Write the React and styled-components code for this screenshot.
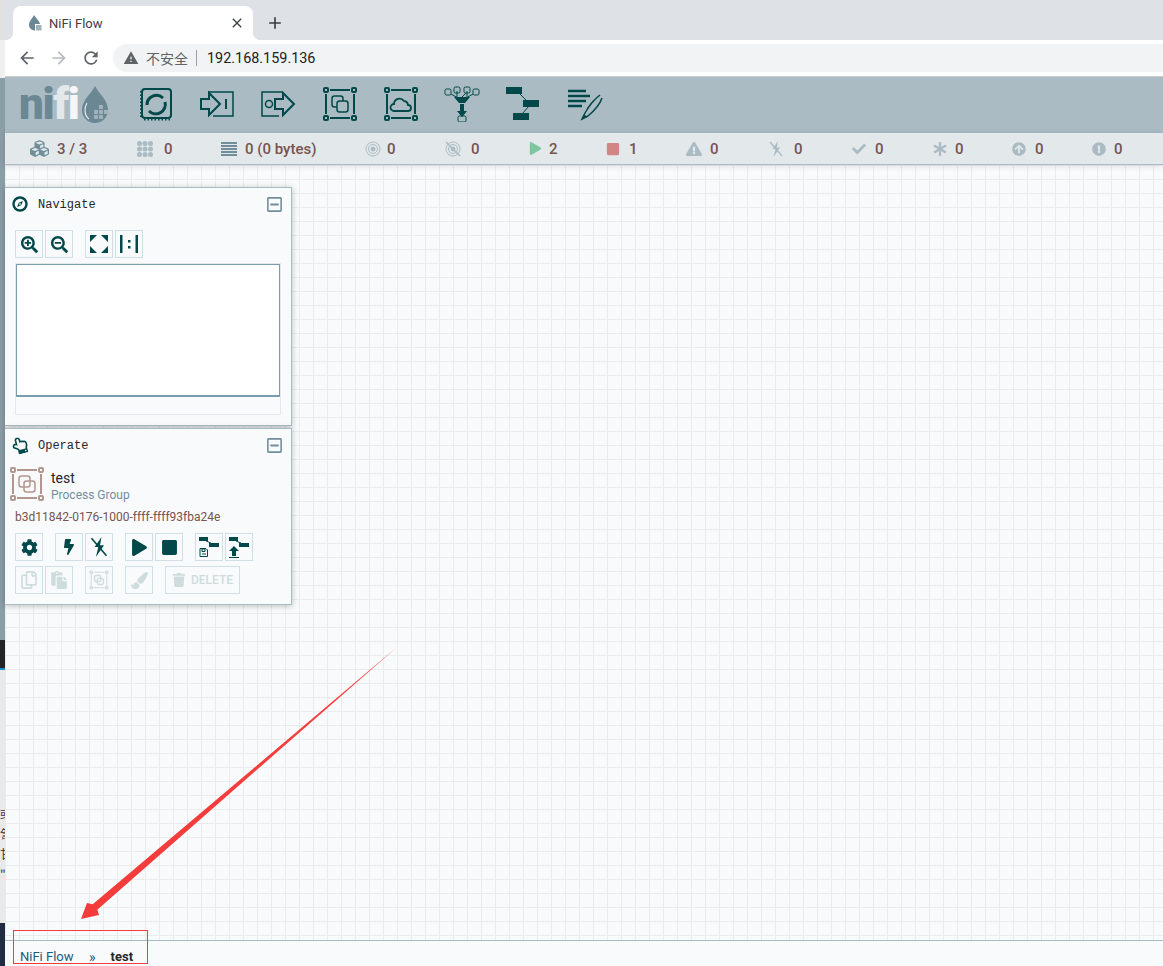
import React from 'react';
import styled, { createGlobalStyle } from 'styled-components';
import {
  FaCubes, FaPlay, FaStop, FaExclamationTriangle, FaCheck, FaAsterisk,
  FaArrowCircleUp, FaExclamationCircle, FaBolt, FaSearchPlus, FaSearchMinus, FaCog,
  FaPaintBrush, FaTrash, FaRegCopy, FaPaste, FaRegHandPointUp, FaRegMinusSquare,
} from 'react-icons/fa';

const TEAL = '#004849';
const MUTED = '#aabbc3';
const SLATE = '#728e9b';
const BROWN = '#775351';
const FADED = '#cfdcdd';

const GlobalStyle = createGlobalStyle`
  html, body { margin: 0; padding: 0; height: 100%; overflow: hidden; }
  body { font-family: Roboto, "Noto Sans CJK SC", sans-serif; }
  * { box-sizing: border-box; }
`;

const Page = styled.div`
  position: relative;
  display: flex;
  width: 1163px;
  height: 966px;
  overflow: hidden;
`;

const Sliver = styled.div`
  width: 5px;
  flex: none;
  display: flex;
  flex-direction: column;
  overflow: hidden;
`;

const SliverPart = styled.div`
  height: ${(p) => p.$h}px;
  flex: none;
  background: ${(p) => p.$bg};
  border-bottom: ${(p) => (p.$line ? `2px solid ${p.$line}` : 'none')};
`;

const SliverText = styled(SliverPart)`
  display: flex;
  flex-direction: column;
  gap: 8px;
  padding-top: 138px;
  align-items: flex-end;
  font: 12px "Noto Sans CJK SC", sans-serif;
  line-height: 12px;
  color: #3a3340;
  direction: rtl;
  white-space: nowrap;
`;

const Browser = styled.div`
  flex: 1;
  min-width: 0;
  display: flex;
  flex-direction: column;
`;

const TabStrip = styled.div`
  height: 40px;
  flex: none;
  background: #dee1e6;
  display: flex;
  align-items: flex-end;
  padding-left: 8px;
`;

const Tab = styled.div`
  position: relative;
  width: 240px;
  height: 34px;
  background: #fff;
  border-radius: 8px 8px 0 0;
  display: flex;
  align-items: center;
  padding: 0 8px 0 15px;
  &::before, &::after {
    content: '';
    position: absolute;
    bottom: 0;
    width: 8px;
    height: 8px;
  }
  &::before { left: -8px; background: radial-gradient(circle at 0 0, transparent 8px, #fff 8.5px); }
  &::after { right: -8px; background: radial-gradient(circle at 100% 0, transparent 8px, #fff 8.5px); }
`;

const TabTitle = styled.span`
  flex: 1;
  margin-left: 7px;
  font-size: 13px;
  color: #3c4043;
`;

const ChromeGlyph = styled.svg`
  width: ${(p) => p.$size || 18}px;
  height: ${(p) => p.$size || 18}px;
  flex: none;
  fill: ${(p) => p.$color || '#5f6368'};
`;

const NewTab = styled.div`
  width: 44px;
  height: 34px;
  display: flex;
  align-items: center;
  justify-content: center;
`;

const AddressBar = styled.div`
  height: 37px;
  flex: none;
  background: #fff;
  border-bottom: 1px solid #c8ccd0;
  display: flex;
  align-items: flex-start;
  padding: 4px 0 0 6px;
`;

const NavButton = styled.div`
  width: 32px;
  height: 28px;
  flex: none;
  display: flex;
  align-items: center;
  justify-content: center;
`;

const Omnibox = styled.div`
  flex: 1;
  height: 28px;
  margin-left: 6px;
  background: #f1f3f4;
  border-radius: 14px 0 0 14px;
  display: flex;
  align-items: center;
  padding-left: 10px;
`;

const Insecure = styled.span`
  margin-left: 7px;
  font: 14px "Noto Sans CJK SC", sans-serif;
  color: #5f6368;
`;

const OmniDivider = styled.span`
  width: 1px;
  height: 16px;
  margin: 0 10px 0 8px;
  background: #9aa0a6;
`;

const Url = styled.span`
  font-size: 14.4px;
  color: #202124;
`;

const Toolbar = styled.header`
  height: 56px;
  flex: none;
  background: ${MUTED};
  display: flex;
  align-items: center;
  padding: 0 0 3px 14px;
`;

const Logo = styled.div`
  width: 106px;
  height: 42px;
  flex: none;
  display: flex;
  align-items: center;
`;

const LogoWord = styled.span`
  font: 900 44px/42px Roboto, sans-serif;
  letter-spacing: -1.4px;
  color: #6b8794;
  span { color: #e3e8eb; }
  span + span { color: #f4f6f7; }
`;

const DropSvg = styled.svg`
  width: 28px;
  height: 38px;
  margin-left: 3px;
  flex: none;
`;

const ToolIcon = styled.div`
  width: 61.3px;
  height: 36px;
  flex: none;
  display: flex;
  justify-content: center;
  svg {
    width: 36px;
    height: 36px;
    fill: none;
    stroke: ${TEAL};
    stroke-width: 2;
  }
`;

const StatusBar = styled.div`
  position: relative;
  z-index: 1;
  height: 32px;
  flex: none;
  background: #e3e8eb;
  border-bottom: 1px solid ${MUTED};
  box-shadow: 0 1px 6px rgba(0, 0, 0, 0.12);
  display: flex;
  align-items: center;
  padding-left: 25px;
`;

const StatItem = styled.div`
  width: ${(p) => p.$w}px;
  flex: none;
  display: flex;
  align-items: center;
  font-size: 15px;
  font-weight: 500;
  color: ${BROWN};
`;

const StatIcon = styled.span`
  width: ${(p) => p.$w}px;
  height: 18px;
  flex: none;
  display: flex;
  align-items: center;
  color: ${(p) => p.$color || MUTED};
  svg { display: block; }
`;

const Canvas = styled.main`
  position: relative;
  flex: 1;
  min-height: 0;
  background-color: #f9fafb;
  background-image:
    linear-gradient(to right, #e9ebed 1px, transparent 1px),
    linear-gradient(to bottom, #e9ebed 1px, transparent 1px);
  background-size: 14px 14px;
`;

const PaletteColumn = styled.div`
  position: absolute;
  left: 0;
  top: 22px;
  width: 287px;
  display: flex;
  flex-direction: column;
  gap: 2px;
`;

const Palette = styled.section`
  height: ${(p) => p.$h}px;
  padding: 0 10px;
  background: rgba(249, 250, 251, 0.97);
  border: 1px solid ${MUTED};
  border-left: none;
  box-shadow: 0 1px 6px rgba(0, 0, 0, 0.25);
`;

const PaletteHead = styled.div`
  height: 34px;
  padding-bottom: 2px;
  display: flex;
  align-items: center;
  margin-left: -3px;
`;

const PaletteTitle = styled.h3`
  flex: 1;
  margin: 2px 0 0 10px;
  font: 400 12px "Liberation Mono", monospace;
  color: #262626;
`;

const HeadIcon = styled.span`
  width: 16px;
  display: flex;
  justify-content: center;
  color: ${TEAL};
  transform: rotate(${(p) => p.$tilt || 0}deg);
`;

const Collapse = styled.span`
  display: flex;
  margin-right: -2px;
  color: ${SLATE};
`;

const ButtonRow = styled.div`
  display: flex;
  gap: 12px;
  margin-top: ${(p) => p.$top || 0}px;
`;

const ButtonGroup = styled.div`
  display: flex;
  gap: 2px;
`;

const ActionButton = styled.button`
  width: ${(p) => (p.$wide ? 75 : 28)}px;
  height: 28px;
  padding: 0;
  background: transparent;
  border: 1px solid #cfdfe3;
  display: flex;
  align-items: center;
  justify-content: center;
  gap: 5px;
  color: ${(p) => (p.disabled ? FADED : TEAL)};
  font: 500 12px Roboto, sans-serif;
`;

const Birdseye = styled.div`
  width: 266px;
  height: 152px;
  margin-top: 5px;
  border: 1px solid #e3e8eb;
`;

const Viewport = styled.div`
  height: 133px;
  background: #fff;
  border: 1px solid #7a9cae;
  border-bottom-width: 2px;
`;

const GroupRow = styled.div`
  display: flex;
  align-items: flex-start;
  height: 32px;
  margin: 5px 0 0 -4px;
`;

const GroupIcon = styled.svg`
  width: 36px;
  height: 36px;
  margin: -2px 0 0 -2px;
  flex: none;
  fill: none;
  stroke: #b3978f;
  stroke-width: 2;
`;

const GroupName = styled.div`
  margin-left: 6px;
  padding-top: 2px;
  font-size: 14px;
  line-height: 16px;
  color: #262626;
`;

const GroupType = styled.div`
  font-size: 12px;
  line-height: 18px;
  color: ${SLATE};
`;

const GroupId = styled.div`
  margin-top: 9px;
  font-size: 12px;
  line-height: 16px;
  color: ${BROWN};
`;

const Breadcrumbs = styled.footer`
  height: 26px;
  flex: none;
  background: #f9fafb;
  border-top: 1px solid ${MUTED};
  display: flex;
  align-items: flex-start;
  padding: 8px 0 0 15px;
  font-size: 13px;
  line-height: 16px;
  color: #1c5a7a;
`;

const CrumbSep = styled.span`
  margin: 0 15px 0 15.5px;
  font-size: 14px;
`;

const CrumbCurrent = styled.b`
  color: #262626;
  font-size: 13px;
  font-weight: 700;
`;

const ArrowOverlay = styled.svg`
  position: absolute;
  left: 0;
  top: 0;
  width: 1163px;
  height: 966px;
  pointer-events: none;
`;

const RedBox = styled.div`
  position: absolute;
  left: 13px;
  top: 930px;
  width: 135px;
  height: 34px;
  border: 1px solid #f33c3c;
  pointer-events: none;
`;

const Favicon = () => (
  <svg width="14" height="17" viewBox="0 0 14 17">
    <path d="M6 0C4 4 1 6 1 10a5.5 5.5 0 0 0 6 5.5V9h5C11 5 7.5 3 6 0z" fill="#6b8794" />
    <rect x="8" y="10" width="5.5" height="5.5" fill="#9fb2bb" />
  </svg>
);

const ProcessorIcon = () => (
  <svg viewBox="0 0 36 36">
    <rect x="4" y="3" width="29" height="29" rx="3" />
    <path d="M3 5v27M6 33.500h27" strokeDasharray="1.500 2" />
    <path d="M9 19a9.500 9.500 0 0 1 16-7" strokeWidth="3" />
    <path d="M27 16a9.500 9.500 0 0 1-16 9" strokeWidth="3" />
  </svg>
);

const InputPortIcon = () => (
  <svg viewBox="0 0 36 36">
    <path d="M10 6h24v24H14" strokeWidth="1.500" />
    <path d="M2 13h8V7l11 11-11 11v-6H2z" fill={MUTED} />
    <path d="M27 13v10" />
  </svg>
);

const OutputPortIcon = () => (
  <svg viewBox="0 0 36 36">
    <path d="M22 6H2v24h17" strokeWidth="1.500" />
    <circle cx="9" cy="18" r="3.500" strokeWidth="1.500" />
    <path d="M15 13h8V7l11 11-11 11v-6h-8z" fill={MUTED} />
  </svg>
);

// shared frame for the process group icons: corner handles and bars
const GroupFrame = ({ children }) => (
  <>
    <rect x="2" y="2" width="4" height="4" rx="1" />
    <rect x="30" y="2" width="4" height="4" rx="1" />
    <rect x="2" y="30" width="4" height="4" rx="1" />
    <rect x="30" y="30" width="4" height="4" rx="1" />
    <path d="M8 4h20M8 32h20M4 8v20M32 8v20" strokeWidth="2" />
    {children}
  </>
);

const ProcessGroupIcon = () => (
  <svg viewBox="0 0 36 36">
    <GroupFrame>
      <rect x="10" y="10" width="11" height="11" rx="2.500" strokeWidth="1.500" />
      <rect x="15" y="15" width="11" height="11" rx="2.500" strokeWidth="1.500" fill={MUTED} />
    </GroupFrame>
  </svg>
);

const RemoteGroupIcon = () => (
  <svg viewBox="0 0 36 36">
    <GroupFrame>
      <path d="M11 25a3.500 3.500 0 0 1 0-7 5.500 5.500 0 0 1 10-3 4.500 4.500 0 0 1 4 4 3 3 0 0 1 0 6z" strokeWidth="1.800" />
    </GroupFrame>
  </svg>
);

const FunnelIcon = () => (
  <svg viewBox="0 0 36 36">
    <g strokeWidth="1">
      <rect x="1" y="3" width="6" height="6" rx="1.500" />
      <rect x="10" y="1" width="6" height="6" rx="1.500" />
      <rect x="20" y="1" width="6" height="6" rx="1.500" />
      <rect x="29" y="3" width="6" height="6" rx="1.500" />
      <path d="M7 8l7 4M22 7l-5 5M29 8l-7 4M13 5v6M23 5v6" />
      <rect x="14" y="30" width="8" height="6" rx="1.500" />
    </g>
    <path d="M10 11h16l-5 6h-6z" fill={TEAL} stroke="none" />
    <path d="M16 18h4v7h3l-5 6-5-6h3z" fill={TEAL} stroke="none" />
  </svg>
);

const TemplateIcon = () => (
  <svg viewBox="0 0 36 36">
    <rect x="1" y="1" width="16" height="7" fill={TEAL} stroke="none" />
    <rect x="18" y="14" width="16" height="7" fill={TEAL} stroke="none" />
    <rect x="8" y="27" width="16" height="7" fill={TEAL} stroke="none" />
    <path d="M14 7l8 8M24 20l-7 8" strokeWidth="1" />
  </svg>
);

const LabelIcon = () => (
  <svg viewBox="0 0 36 36">
    <path d="M1 5h18M1 10h22M1 15h18M1 20h14" strokeWidth="2.500" />
    <path d="M33 9c-4 3-11 11-15 18l-3 6 6-3c6-5 12-12 14-18" strokeWidth="1.500" />
    <path d="M27 14c-3 3-5 6-7 9" strokeWidth="1" />
    <path d="M15 33l2-5 3 3z" fill={TEAL} stroke="none" />
  </svg>
);

const CompassIcon = () => (
  <svg width="16" height="16" viewBox="0 0 16 16" fill="none" stroke={TEAL}>
    <circle cx="8" cy="8" r="6.500" strokeWidth="2.400" />
    <path d="M11 5L9.200 9.200 5 11l1.800-4.200zM8 7.200a.8.8 0 1 0 .01 0" fill={TEAL} stroke="none" fillRule="evenodd" />
  </svg>
);

const ThreadGrid = () => (
  <svg width="18" height="16" viewBox="0 0 18 16" fill={MUTED}>
    {[2.5, 8, 13.5].map((y) => [2.5, 8, 13.5].map((x) => (
      <circle key={`${x}-${y}`} cx={x} cy={y} r="2.500" />
    )))}
  </svg>
);

const QueueBars = () => (
  <svg width="16" height="14" viewBox="0 0 16 14" fill={SLATE}>
    {[0, 3, 6, 9, 12].map((y) => <rect key={y} y={y} width="16" height="2" />)}
  </svg>
);

const Transmitting = ({ slashed }) => (
  <svg width="16" height="16" viewBox="0 0 16 16" fill="none" stroke={MUTED}>
    <circle cx="8" cy="8" r="7" />
    <circle cx="8" cy="8" r="4.500" />
    <circle cx="8" cy="8" r="2" fill={MUTED} />
    {slashed && <path d="M1 1l14 14" strokeWidth="1.500" />}
  </svg>
);

const BoltSlash = ({ size = 16, color = MUTED }) => (
  <svg width={size} height={size} viewBox="0 0 16 16" fill={color}>
    <path d="M10 0L4.500 8H7.500L5.500 16 12 6.500H8.800z" />
    <path d="M2 1l12 14" stroke={color} strokeWidth="1.300" />
  </svg>
);

const FitIcon = () => (
  <svg width="20" height="20" viewBox="0 0 20 20" fill={TEAL}>
    <path d="M1 1h7L1 8zM19 1v7l-7-7zM1 19v-7l7 7zM19 19h-7l7-7z" />
  </svg>
);

const ActualSizeIcon = () => (
  <svg width="18" height="20" viewBox="0 0 18 20" fill={TEAL}>
    <rect x="0" y="1" width="2.500" height="18" />
    <rect x="15.500" y="1" width="2.500" height="18" />
    <rect x="8" y="6" width="2.500" height="2.500" />
    <rect x="8" y="12" width="2.500" height="2.500" />
  </svg>
);

const TemplateMini = ({ upload }) => (
  <svg width="22" height="22" viewBox="0 0 22 22" fill={TEAL}>
    <rect x="1" y="1" width="9" height="4" />
    <rect x="11" y="7" width="10" height="4" />
    <path d="M8 5l5 2" stroke={TEAL} fill="none" />
    {upload
      ? <path d="M6 10l5 5H8v5H4v-5H1zM1 21h10v1H1z" />
      : <path d="M2 12.500h6l1.500 1.500v6.500H2zM4 13v2.500h3V13zM4 18h4" fill="none" stroke={TEAL} strokeWidth="1" />}
  </svg>
);

const CloneIcon = () => (
  <svg width="20" height="20" viewBox="0 0 36 36" fill="none" stroke={FADED} strokeWidth="2.500">
    <GroupFrame>
      <rect x="10" y="10" width="11" height="11" rx="2.500" />
      <rect x="15" y="15" width="11" height="11" rx="2.500" />
    </GroupFrame>
  </svg>
);

const statuses = [
  { w: 107, iw: 27, icon: <FaCubes size={19} />, color: SLATE, text: '3 / 3' },
  { w: 84, iw: 27, icon: <ThreadGrid />, text: '0' },
  { w: 144, iw: 24, icon: <QueueBars />, text: '0 (0 bytes)' },
  { w: 80, iw: 22, icon: <Transmitting />, text: '0' },
  { w: 84, iw: 26, icon: <Transmitting slashed />, text: '0' },
  { w: 77, iw: 20, icon: <FaPlay size={13} />, color: '#7dc7a0', text: '2' },
  { w: 80, iw: 23, icon: <FaStop size={14} />, color: '#d18686', text: '1' },
  { w: 82, iw: 24, icon: <FaExclamationTriangle size={16} />, text: '0' },
  { w: 84, iw: 26, icon: <BoltSlash />, text: '0' },
  { w: 81, iw: 23, icon: <FaCheck size={14} />, text: '0' },
  { w: 79, iw: 22, icon: <FaAsterisk size={14} />, text: '0' },
  { w: 80, iw: 23, icon: <FaArrowCircleUp size={14} />, text: '0' },
  { w: 60, iw: 22, icon: <FaExclamationCircle size={14} />, text: '0' },
];

const toolIcons = [
  <ProcessorIcon />, <InputPortIcon />, <OutputPortIcon />, <ProcessGroupIcon />,
  <RemoteGroupIcon />, <FunnelIcon />, <TemplateIcon />, <LabelIcon />,
];

function App() {
  return (
    <Page>
      <GlobalStyle />
      <Sliver>
        <SliverPart $h={40} $bg="#e1e1e1" />
        <SliverPart $h={38} $bg="#efefef" />
        <SliverPart $h={562} $bg="#8a9ea7" />
        <SliverPart $h={30} $bg="#222427" $line="#1a8fd0" />
        <SliverText $h={253} $bg="#e9e9e9">
          <span>彧</span>
          <span>訇</span>
          <span>甘</span>
          <span>"</span>
        </SliverText>
        <SliverPart $h={43} $bg="#1f2c42" />
      </Sliver>

      <Browser>
        <TabStrip>
          <Tab>
            <Favicon />
            <TabTitle>NiFi Flow</TabTitle>
            <ChromeGlyph viewBox="0 0 24 24" $size={16} $color="#3c4043">
              <path d="M19 6.410L17.590 5 12 10.590 6.410 5 5 6.410 10.590 12 5 17.590 6.410 19 12 13.410 17.590 19 19 17.590 13.410 12z" />
            </ChromeGlyph>
          </Tab>
          <NewTab>
            <ChromeGlyph viewBox="0 0 24 24" $size={20} $color="#3c4043">
              <path d="M19 13h-6v6h-2v-6H5v-2h6V5h2v6h6z" />
            </ChromeGlyph>
          </NewTab>
        </TabStrip>

        <AddressBar>
          <NavButton>
            <ChromeGlyph viewBox="0 0 24 24" $size={20}>
              <path d="M20 11H7.830l5.590-5.590L12 4l-8 8 8 8 1.410-1.410L7.830 13H20z" />
            </ChromeGlyph>
          </NavButton>
          <NavButton>
            <ChromeGlyph viewBox="0 0 24 24" $size={20} $color="#b8bbbf">
              <path d="M4 11h12.170l-5.590-5.590L12 4l8 8-8 8-1.410-1.410L16.170 13H4z" />
            </ChromeGlyph>
          </NavButton>
          <NavButton>
            <ChromeGlyph viewBox="0 0 24 24" $size={20}>
              <path d="M17.650 6.350A7.958 7.958 0 0 0 12 4c-4.420 0-7.990 3.580-7.990 8s3.570 8 7.990 8c3.730 0 6.840-2.550 7.730-6h-2.080A5.990 5.990 0 0 1 12 18c-3.310 0-6-2.690-6-6s2.690-6 6-6c1.660 0 3.140.690 4.220 1.780L13 11h7V4z" />
            </ChromeGlyph>
          </NavButton>
          <Omnibox>
            <ChromeGlyph viewBox="0 0 24 24" $size={16}>
              <path d="M1 21h22L12 2zm12-3h-2v-2h2zm0-4h-2v-4h2z" />
            </ChromeGlyph>
            <Insecure>不安全</Insecure>
            <OmniDivider />
            <Url>192.168.159.136</Url>
          </Omnibox>
        </AddressBar>

        <Toolbar>
          <Logo>
            <LogoWord>ni<span>f</span><span>i</span></LogoWord>
            <DropSvg viewBox="0 0 28 38">
              <path d="M14 1C10 9 1 15 1 25a13 13 0 0 0 26 0C27 15 18 9 14 1z" fill="#6b8794" />
              <path d="M6 18c-3 5-3 12 2 16" fill="none" stroke="#e3e8eb" strokeWidth="1.200" />
              <g fill="#9fb2bb">
                <rect x="18" y="20" width="4" height="4" />
                <rect x="13" y="25" width="4" height="4" />
                <rect x="18" y="25" width="4" height="4" />
                <rect x="23" y="25" width="4" height="4" />
                <rect x="13" y="30" width="4" height="4" />
                <rect x="18" y="30" width="4" height="4" />
              </g>
            </DropSvg>
          </Logo>
          {toolIcons.map((icon, i) => <ToolIcon key={i}>{icon}</ToolIcon>)}
        </Toolbar>

        <StatusBar>
          {statuses.map((s, i) => (
            <StatItem key={i} $w={s.w}>
              <StatIcon $w={s.iw} $color={s.color}>{s.icon}</StatIcon>
              {s.text}
            </StatItem>
          ))}
        </StatusBar>

        <Canvas>
          <PaletteColumn>
            <Palette $h={239}>
              <PaletteHead>
                <HeadIcon><CompassIcon /></HeadIcon>
                <PaletteTitle>Navigate</PaletteTitle>
                <Collapse><FaRegMinusSquare size={17} /></Collapse>
              </PaletteHead>
              <ButtonRow $top={8}>
                <ButtonGroup>
                  <ActionButton><FaSearchPlus size={17} /></ActionButton>
                  <ActionButton><FaSearchMinus size={17} /></ActionButton>
                </ButtonGroup>
                <ButtonGroup>
                  <ActionButton><FitIcon /></ActionButton>
                  <ActionButton><ActualSizeIcon /></ActionButton>
                </ButtonGroup>
              </ButtonRow>
              <Birdseye>
                <Viewport />
              </Birdseye>
            </Palette>

            <Palette $h={177}>
              <PaletteHead>
                <HeadIcon $tilt={-15}><FaRegHandPointUp size={17} /></HeadIcon>
                <PaletteTitle>Operate</PaletteTitle>
                <Collapse><FaRegMinusSquare size={17} /></Collapse>
              </PaletteHead>
              <GroupRow>
                <GroupIcon viewBox="0 0 36 36">
                  <GroupFrame>
                    <rect x="10" y="10" width="11" height="11" rx="2.500" strokeWidth="1.500" />
                    <rect x="15" y="15" width="11" height="11" rx="2.500" strokeWidth="1.500" />
                  </GroupFrame>
                </GroupIcon>
                <GroupName>
                  test
                  <GroupType>Process Group</GroupType>
                </GroupName>
              </GroupRow>
              <GroupId>b3d11842-0176-1000-ffff-ffff93fba24e</GroupId>
              <ButtonRow $top={8}>
                <ButtonGroup>
                  <ActionButton><FaCog size={17} /></ActionButton>
                </ButtonGroup>
                <ButtonGroup>
                  <ActionButton><FaBolt size={16} /></ActionButton>
                  <ActionButton><BoltSlash size={20} color={TEAL} /></ActionButton>
                </ButtonGroup>
                <ButtonGroup>
                  <ActionButton><FaPlay size={17} /></ActionButton>
                  <ActionButton><FaStop size={17} /></ActionButton>
                </ButtonGroup>
                <ButtonGroup>
                  <ActionButton><TemplateMini /></ActionButton>
                  <ActionButton><TemplateMini upload /></ActionButton>
                </ButtonGroup>
              </ButtonRow>
              <ButtonRow $top={5}>
                <ButtonGroup>
                  <ActionButton disabled><FaRegCopy size={18} /></ActionButton>
                  <ActionButton disabled><FaPaste size={18} /></ActionButton>
                </ButtonGroup>
                <ButtonGroup>
                  <ActionButton disabled><CloneIcon /></ActionButton>
                </ButtonGroup>
                <ButtonGroup>
                  <ActionButton disabled><FaPaintBrush size={17} /></ActionButton>
                </ButtonGroup>
                <ButtonGroup>
                  <ActionButton disabled $wide><FaTrash size={14} />DELETE</ActionButton>
                </ButtonGroup>
              </ButtonRow>
            </Palette>
          </PaletteColumn>
        </Canvas>

        <Breadcrumbs>
          NiFi Flow
          <CrumbSep>»</CrumbSep>
          <CrumbCurrent>test</CrumbCurrent>
        </Breadcrumbs>
      </Browser>

      <ArrowOverlay viewBox="0 0 1163 966">
        <polygon
          points="397,647 97.300,909.700 99,915 81,919 87,903 92.700,904.300"
          fill="#f33c3c"
        />
      </ArrowOverlay>
      <RedBox />
    </Page>
  );
}

export default App;
